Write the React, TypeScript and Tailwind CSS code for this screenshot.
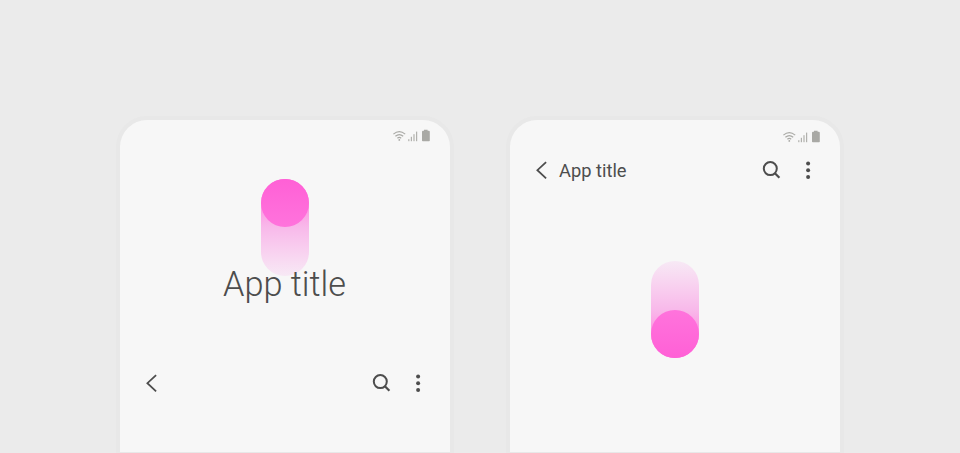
import React from "react";

function StatusIcons() {
  return (
    <svg className="block h-4 w-10" viewBox="0 0 40 16" fill="none">
      <g stroke="#aaaaa6" strokeWidth="1.2">
        <path d="M1.4 6.1Q7.3 1 13.2 6.1" />
        <path d="M3.4 8.3Q7.3 4.9 11.2 8.3" />
        <path d="M5.4 10.2Q7.3 8.6 9.2 10.2" />
      </g>
      <circle cx="7.3" cy="11.9" r="0.9" fill="#aaaaa6" />
      <g fill="#b1b1ad">
        <rect x="16.2" y="11.2" width="1.2" height="2" />
        <rect x="18.8" y="8.8" width="1.2" height="4.4" />
        <rect x="21.4" y="6.2" width="1.2" height="7" />
        <rect x="24" y="3.6" width="1.2" height="9.6" />
      </g>
      <path d="M32 1.7h3.6v1.1h1.2q1 0 1 1v8.6q0 .8-.8.8h-6.2q-.8 0-.8-.8V3.8q0-1 1-1h1z" fill="#a9a9a5" />
    </svg>
  );
}

function BackIcon() {
  return (
    <svg className="block h-6 w-6" viewBox="0 0 24 24" fill="none" stroke="#4d4d4d" strokeWidth="1.8">
      <path d="M16.1 4.1L7.4 12.2l8.7 8.1" />
    </svg>
  );
}

function SearchIcon() {
  return (
    <svg className="block h-6 w-6" viewBox="0 0 24 24" fill="none" stroke="#4d4d4d" strokeWidth="2">
      <circle cx="10.3" cy="10.6" r="6.5" />
      <path d="M14.7 15l4.7 4.7" strokeWidth="2.2" />
    </svg>
  );
}

function MoreIcon() {
  return (
    <svg className="block h-6 w-6" viewBox="0 0 24 24" fill="#4d4d4d">
      <circle cx="12.1" cy="5.5" r="2" />
      <circle cx="12.1" cy="12.2" r="2" />
      <circle cx="12.1" cy="18.9" r="2" />
    </svg>
  );
}

function Toolbar({ title }: { title?: string }) {
  return (
    <div className="flex h-6 items-center pl-5 pr-5">
      <BackIcon />
      {title && <span className="ml-[5px] pt-0.5 text-[18.3px] leading-6 text-[#4d4d4d]">{title}</span>}
      <div className="ml-auto flex gap-3">
        <SearchIcon />
        <MoreIcon />
      </div>
    </div>
  );
}

function Phone({ children }: { children: React.ReactNode }) {
  return (
    <section className="flex h-[332px] w-[330px] flex-col rounded-t-[27px] bg-[#f7f7f7] shadow-[0_0_0_4px_#e8e8e8]">
      {children}
    </section>
  );
}

export default function App() {
  return (
    <main className="flex h-[453px] w-[960px] gap-[60px] overflow-hidden bg-[#ebebeb] pl-[120px] pt-[120px] font-['Roboto',sans-serif]">
      <Phone>
        <div className="flex h-[59px] justify-end pr-[18px] pt-2">
          <StatusIcons />
        </div>
        <div className="h-[97px] w-12 self-center rounded-full bg-linear-to-b from-[#ff62d8] from-0% via-[#f8b9ea] via-50% to-[#f7e9f5] to-100%">
          <div className="h-12 w-12 rounded-full bg-linear-to-b from-[#ff60d6] to-[#ff73dc]" />
        </div>
        <h1 className="relative -mt-3 self-center pr-px text-center text-[34.3px] font-light leading-10 text-[#4d4d4d]">
          App title
        </h1>
        <div className="mt-[67px]">
          <Toolbar />
        </div>
      </Phone>
      <Phone>
        <div className="flex h-[38px] justify-end pr-[18px] pt-[9px]">
          <StatusIcons />
        </div>
        <Toolbar title="App title" />
        <div className="mt-[79px] flex h-[97px] w-12 items-end self-center rounded-full bg-linear-to-t from-[#ff62d8] from-0% via-[#f8b9ea] via-50% to-[#f7e9f5] to-100%">
          <div className="h-12 w-12 rounded-full bg-linear-to-t from-[#ff60d6] to-[#ff73dc]" />
        </div>
      </Phone>
    </main>
  );
}
